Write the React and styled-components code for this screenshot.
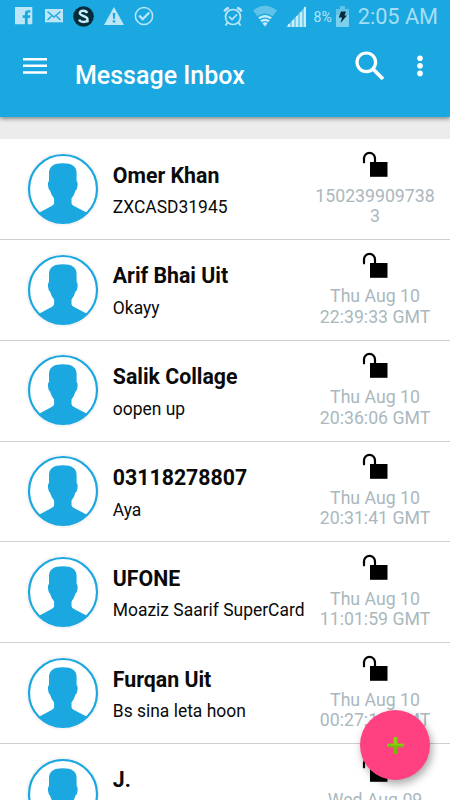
import styled, { createGlobalStyle } from 'styled-components'

const messages = [
  { name: 'Omer Khan', text: 'ZXCASD31945', date: '1502399097383' },
  { name: 'Arif Bhai Uit', text: 'Okayy', date: 'Thu Aug 10 22:39:33 GMT' },
  { name: 'Salik Collage', text: 'oopen up', date: 'Thu Aug 10 20:36:06 GMT' },
  { name: '03118278807', text: 'Aya', date: 'Thu Aug 10 20:31:41 GMT' },
  { name: 'UFONE', text: 'Moaziz Saarif SuperCard', date: 'Thu Aug 10 11:01:59 GMT' },
  { name: 'Furqan Uit', text: 'Bs sina leta hoon', date: 'Thu Aug 10 00:27:15 GMT' },
  { name: 'J.', text: '', date: 'Wed Aug 09' },
]

const StatusBar = () => (
  <Status>
    <StatusIcon width="18" height="18" viewBox="0 0 18 18" $left={15}>
      <path fill="#bce6f7" d="M0 0h17.300v17.200h-4.600v-6.300h2.200l.4-2.600h-2.600V6.700q0-1.200 1.400-1.200h1.300V3.200h-2.300q-3.200 0-3.200 3.100v2H7.700v2.600h2.200v6.300H0z" />
    </StatusIcon>
    <StatusIcon width="18" height="14" viewBox="0 0 18 14" $left={12}>
      <path fill="#bce6f7" d="M0 0h18v13.300H0z" />
      <path fill="none" stroke="#1ba8e0" strokeWidth="1.400" d="M2.500 2.500l6.500 5.500 6.500-5.500M2.500 11l4-3.800M15.500 11l-4-3.800" />
    </StatusIcon>
    <StatusIcon width="21" height="21" viewBox="0 0 21 21" $left={10}>
      <circle cx="10.500" cy="10.500" r="10.300" fill="#062b39" />
      <path fill="none" stroke="#c6ebf9" strokeWidth="2.400" d="M14.200 7C13 3.800 6.500 4 6.800 7.300c.2 3.200 7.700 2.200 7.700 6 0 3.600-7.400 3.400-8.300.2" />
      <circle cx="14.500" cy="15.300" r="1.200" fill="#c6ebf9" />
    </StatusIcon>
    <StatusIcon width="20" height="18" viewBox="0 0 20 18" $left={10}>
      <path fill="#bce6f7" d="M10 0l10 18H0z" />
      <path fill="#1ba8e0" d="M8.700 6h2.600l-.5 6H9.200zM8.800 13.200h2.400v2.300H8.800z" />
    </StatusIcon>
    <StatusIcon width="20" height="20" viewBox="0 0 20 20" $left={10}>
      <circle cx="10" cy="10" r="8.600" fill="none" stroke="#bce6f7" strokeWidth="1.500" />
      <path fill="none" stroke="#bce6f7" strokeWidth="2.200" d="M5.200 9.600l3.500 3.500 6.600-6.600" />
    </StatusIcon>
    <Spacer />
    <StatusIcon width="20" height="21" viewBox="0 0 20 21">
      <g fill="none" stroke="#bce6f7">
        <circle cx="10" cy="11" r="7.500" strokeWidth="1.700" />
        <path strokeWidth="2.500" d="M1.500 5.500Q2.500 2.500 6 2M18.500 5.500Q17.500 2.500 14 2" />
        <path strokeWidth="1.700" d="M6 10.500l3 3 5-5M4.500 16.500l-2 3M15.500 16.500l2 3" />
      </g>
    </StatusIcon>
    <StatusIcon width="24" height="22" viewBox="0 0 24 22" $left={10}>
      <path fill="#5fc3e9" d="M12 21.500L0 5.500Q12-4 24 5.500z" />
      <path fill="#c6ebf9" d="M12 21.500L5.300 12.500Q12 7.500 18.700 12.500z" />
      <path fill="none" stroke="#1ba8e0" strokeWidth="1.100" d="M4 12.200Q12 6 20 12.200M6 15.300Q12 11 18 15.300M8.500 18Q12 15.500 15.500 18" />
    </StatusIcon>
    <StatusIcon width="20" height="21" viewBox="0 0 20 21" $left={9}>
      <path fill="#7dcfee" d="M0 21L20 0v21z" />
      <path stroke="#c9edfa" strokeWidth="2" d="M3 21v-3M7 21v-7M11 21V10M15 21V6M19 21V1" />
    </StatusIcon>
    <Battery>8%</Battery>
    <StatusIcon width="13" height="21" viewBox="0 0 13 21" $left={4}>
      <path fill="#5fc3e9" d="M4 0h5v3h4v6H0V3h4z" />
      <path fill="#7dcfee" d="M0 9h13v12H0z" />
      <path fill="#062b39" d="M5 5.500h5L8.500 9.500H11L4.500 17l1.600-5.500H2.800z" />
    </StatusIcon>
    <Clock>2:05 AM</Clock>
  </Status>
)

const Avatar = () => (
  <AvatarIcon viewBox="0 0 76 76">
    <circle cx="38" cy="38" r="37" fill="#f6f4f5" />
    <circle cx="38" cy="38" r="34" fill="#fff" stroke="#1ba8e0" strokeWidth="2.200" />
    <path
      fill="#1ba8e0"
      d="M24 22Q24 12.300 37.800 12.300T51.600 22v8Q53 30.500 52.500 35 51.900 39 50.500 39.500 49.500 43.500 46.500 47.500v4.700Q46.700 53.800 49 55l13 6.800A34 34 0 0 1 14 61.800L26.600 55q2.300-1.200 2.500-2.800v-4.700Q26 43.500 25 39.500 23.700 39 23.100 35 22.600 30.500 24 30z"
    />
  </AvatarIcon>
)

const UnlockIcon = () => (
  <Lock width="26" height="26" viewBox="0 0 26 26">
    <path fill="none" stroke="#000" strokeWidth="2.200" strokeLinecap="round" d="M2 11.300V7.500a5.500 5.700 0 0 1 11 0V12" />
    <path d="M8 11h17.500v14.800H8z" />
  </Lock>
)

const MessageRow = (props) => (
  <Row>
    <Avatar />
    <Content>
      <Name>{props.item.name}</Name>
      <Preview>{props.item.text}</Preview>
    </Content>
    <Meta>
      <UnlockIcon />
      <DateText>{props.item.date}</DateText>
    </Meta>
  </Row>
)

export default function App() {
  return (
    <Screen>
      <GlobalStyle />
      <Header>
        <StatusBar />
        <Toolbar>
          <MenuIcon width="24" height="16" viewBox="0 0 24 16">
            <path fill="#fff" d="M0 0h24v2.500H0zM0 6.500h24v2.500H0zM0 13.200h24v2.500H0z" />
          </MenuIcon>
          <Title>Message Inbox</Title>
          <SearchIcon width="30" height="30" viewBox="0 0 30 30">
            <circle cx="11.300" cy="11.300" r="9.300" fill="none" stroke="#fff" strokeWidth="3.200" />
            <path stroke="#fff" strokeWidth="3.800" d="M17.500 17.500l10.500 10.500" />
          </SearchIcon>
          <MoreIcon width="6" height="22" viewBox="0 0 6 22">
            <circle cx="3" cy="3.200" r="2.800" fill="#fff" />
            <circle cx="3" cy="10.800" r="2.800" fill="#fff" />
            <circle cx="3" cy="18.400" r="2.800" fill="#fff" />
          </MoreIcon>
        </Toolbar>
      </Header>
      <List>
        {messages.map((item) => (
          <MessageRow key={item.name} item={item} />
        ))}
      </List>
      <AddButton aria-label="Add">
        <svg width="17" height="17" viewBox="0 0 17 17">
          <path fill="#78b80a" d="M6.700 0h3.600v17H6.700zM0 6.700h17v3.600H0z" />
          <path fill="#86cf0c" d="M6.700 0h3.600v6.700H17v1.500H0V6.700h6.700z" />
        </svg>
      </AddButton>
    </Screen>
  )
}

const GlobalStyle = createGlobalStyle`
  body {
    margin: 0;
    overflow: hidden;
  }

  * {
    box-sizing: border-box;
  }
`

const Screen = styled.div`
  position: relative;
  width: 450px;
  height: 800px;
  overflow: hidden;
  background: #ececec;
  font-family: Roboto, sans-serif;
`

const Header = styled.header`
  height: 117px;
  background: #1ba8e0;
  box-shadow: 0 2px 4px rgba(0, 0, 0, 0.4);
`

const Status = styled.div`
  display: flex;
  align-items: center;
  height: 32px;
  padding-right: 12px;
`

const StatusIcon = styled.svg`
  flex: none;
  margin-left: ${(props) => props.$left || 0}px;
`

const Spacer = styled.div`
  flex: 1;
`

const Battery = styled.span`
  margin-left: 8px;
  padding-top: 1px;
  font-size: 14px;
  line-height: 20px;
  color: #b4e3f6;
`

const Clock = styled.span`
  margin-left: 9px;
  padding-top: 2px;
  font-size: 21.700px;
  line-height: 26px;
  white-space: nowrap;
  color: #a5def4;
`

const Toolbar = styled.div`
  display: flex;
  align-items: flex-start;
  height: 85px;
  padding-left: 23px;
`

const MenuIcon = styled.svg`
  margin-top: 26px;
`

const Title = styled.h1`
  flex: 1;
  margin: 29px 0 0 28px;
  font-size: 25px;
  font-weight: 500;
  line-height: 30px;
  color: #fff;
`

const SearchIcon = styled.svg`
  margin-top: 19px;
`

const MoreIcon = styled.svg`
  margin: 23px 27px 0 32px;
`

const List = styled.ul`
  margin: 22px 0 0;
  padding: 0.300px 0 0;
  list-style: none;
  background: #fff;
`

const Row = styled.li`
  display: flex;
  height: 100.800px;
  padding: 0 15px 0 24.500px;
  border-bottom: 1px solid #cfcfcf;
`

const AvatarIcon = styled.svg`
  flex: none;
  width: 76px;
  height: 76px;
  margin-top: 11.500px;
`

const Content = styled.div`
  flex: 1;
  padding: 23.300px 0 0 12.300px;
  white-space: nowrap;
  color: #0a0a0a;
`

const Name = styled.div`
  height: 26px;
  font-size: 21.300px;
  font-weight: 700;
  line-height: 26px;
`

const Preview = styled.div`
  margin-top: 8.700px;
  font-size: 17.450px;
  line-height: 20px;
`

const Meta = styled.div`
  display: flex;
  flex-direction: column;
  align-items: center;
  width: 120px;
  padding-top: 11.500px;
`

const Lock = styled.svg`
  flex: none;
`

const DateText = styled.div`
  width: 120px;
  margin-top: 8.800px;
  font-size: 17.700px;
  line-height: 20.400px;
  text-align: center;
  word-break: break-word;
  color: #aab8be;
`

const AddButton = styled.button`
  position: absolute;
  top: 710px;
  left: 360px;
  display: flex;
  align-items: center;
  justify-content: center;
  width: 70px;
  height: 70px;
  padding: 0;
  border: none;
  border-radius: 50%;
  background: #ff4081;
  box-shadow: 2px 4px 8px rgba(0, 0, 0, 0.35);
`
